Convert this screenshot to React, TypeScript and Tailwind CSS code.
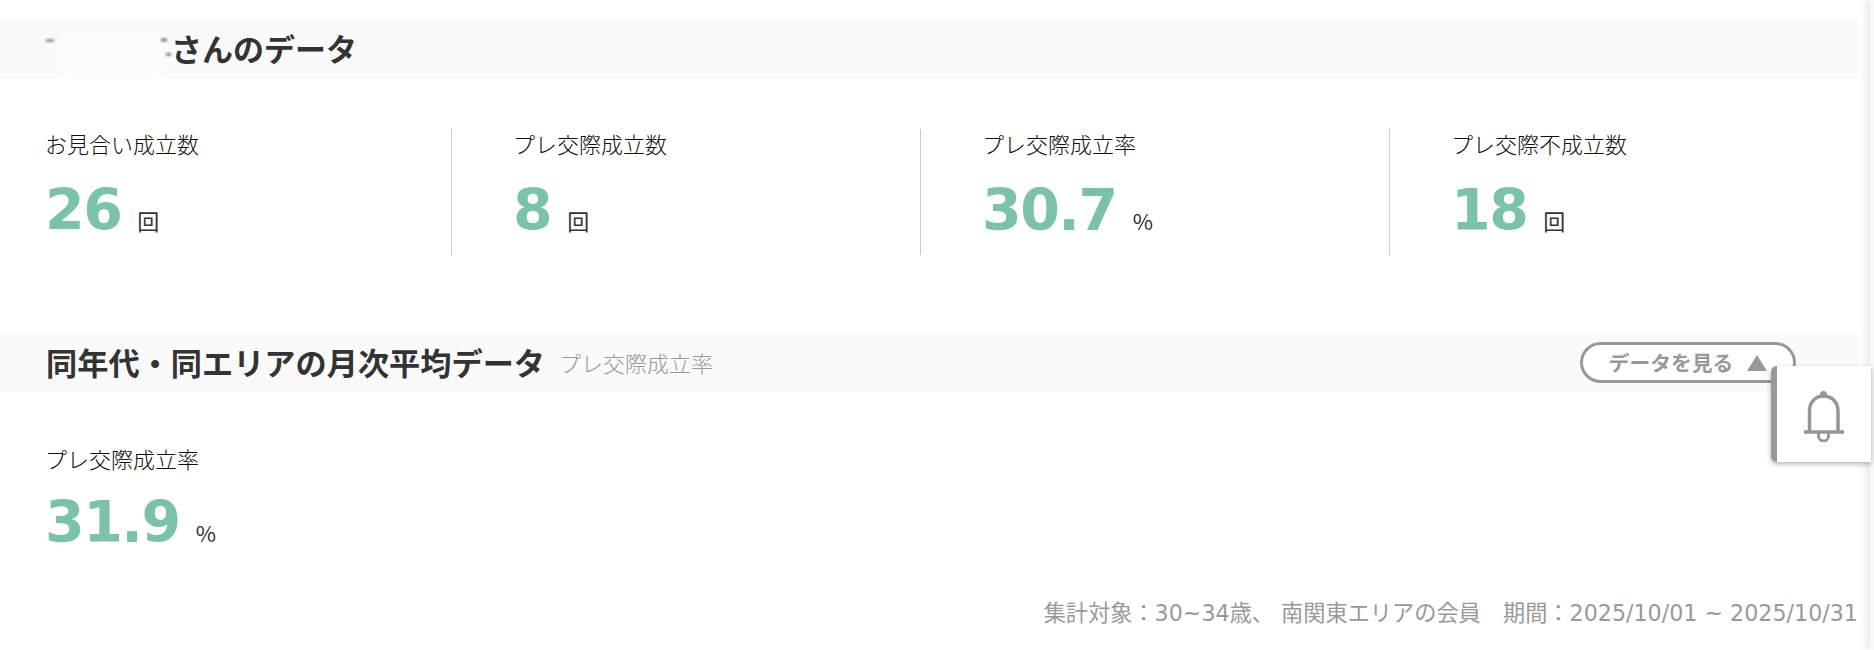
import { Fragment } from 'react'

const font = { fontFamily: '"DejaVu Sans", "Noto Sans CJK JP", sans-serif' }

type Stat = { label: string; value: string; unit: string }

const stats: Stat[] = [
  { label: 'お見合い成立数', value: '26', unit: '回' },
  { label: 'プレ交際成立数', value: '8', unit: '回' },
  { label: 'プレ交際成立率', value: '30.7', unit: '%' },
  { label: 'プレ交際不成立数', value: '18', unit: '回' },
]

function StatBlock({ label, value, unit, tight }: Stat & { tight?: boolean }) {
  return (
    <div>
      <p className="h-[30px] text-[22px] leading-[30px] font-light text-[#111]">{label}</p>
      <p className={`${tight ? 'mt-[11px]' : 'mt-[14px]'} flex h-[70px] items-baseline leading-[70px]`}>
        <span className="text-[57px] font-bold tracking-[-1.5px] text-[#7bc2ab]">{value}</span>
        <span className="ml-[16px] font-['Noto_Sans_CJK_JP'] text-[22px] font-normal text-[#333]">{unit}</span>
      </p>
    </div>
  )
}

function BellIcon() {
  return (
    <svg className="mt-[5px]" width="40" height="51" viewBox="0 0 40 51" fill="none" stroke="#969696" strokeWidth="3.5">
      <circle cx="19.5" cy="3.5" r="3.5" fill="#969696" stroke="none" />
      <path d="M5.5 41V20C5.5 11 11.5 5 19.5 5s14.5 6 14.5 15v21" />
      <path d="M0 41h40" />
      <path d="M14.5 42v3a5 5 0 0 0 10 0v-3" strokeWidth="3" />
    </svg>
  )
}

export default function App() {
  return (
    <div className="relative h-[650px] w-[1874px] overflow-hidden bg-white" style={font}>
      <div className="w-[1858px] pt-[20px]">
        {/* 本人データ */}
        <div className="relative flex h-[59px] items-center bg-[#fafafa] pl-[46px]">
          <h2 className="pt-[1px] text-[31px] font-bold text-[#333]">
            <span className="inline-block w-[125px]" />さんのデータ
          </h2>
          {/* 名前の塗りつぶし跡 */}
          <div className="absolute left-[60px] top-[14px] h-[80px] w-[104px] rounded-b-[30px] bg-white opacity-50 blur-[3px]" />
          <div className="absolute left-[46px] top-[19px] h-[3px] w-[8px] bg-[#999] blur-[1px]" />
          <div className="absolute left-[161px] top-[18px] h-[4px] w-[6px] bg-[#999] blur-[1px]" />
          <div className="absolute left-[166px] top-[33px] h-[3px] w-[5px] bg-[#888] blur-[1px]" />
        </div>

        <div className="mt-[50px] flex h-[126px]">
          {stats.map((s, i) => (
            <Fragment key={s.label}>
              <div className={i === 0 ? 'w-[451px] pl-[45px] pt-[2px]' : 'w-[468px] pl-[61px] pt-[2px]'}>
                <StatBlock {...s} />
              </div>
              {i < 3 && <div className="h-full w-px bg-[#ccc]" />}
            </Fragment>
          ))}
        </div>

        {/* 同年代平均 */}
        <div className="mt-[78px] flex h-[59px] items-center bg-[#fafafa] pl-[46px] pr-[62px]">
          <h2 className="pt-[4px] text-[31.2px] font-bold text-[#333]">同年代・同エリアの月次平均データ</h2>
          <span className="ml-[14px] pt-[4px] text-[22px] font-light text-[#999]">プレ交際成立率</span>
          <button className="ml-auto flex h-[41px] w-[216px] items-center justify-center gap-[14px] rounded-full border-[3px] border-[#999] bg-white pt-[4px] text-[20.8px] font-bold text-[#999]">
            データを見る
            <span className="mb-[3px] h-0 w-0 border-x-[10px] border-b-[16px] border-x-transparent border-b-[#999]" />
          </button>
        </div>

        <div className="mt-[54px] pl-[45px]">
          <StatBlock label="プレ交際成立率" value="31.9" unit="%" tight />
        </div>

        <p className="mt-[40px] whitespace-nowrap text-right text-[22.2px] text-[#999]">
          集計対象：30~34歳、 南関東エリアの会員　期間：2025/10/01 ~ 2025/10/31
        </p>
      </div>

      {/* 右端のパネル影 */}
      <div className="absolute right-0 top-0 h-full w-[4px] bg-[#f8f8f8] shadow-[-2px_0_8px_rgba(0,0,0,0.2)]" />

      {/* 通知ボタン */}
      <div className="absolute right-[3px] top-[366px] flex h-[96px] w-[100px] items-center justify-center rounded-l-[6px] border-l-[6px] border-[#999] bg-white shadow-[0_2px_5px_rgba(0,0,0,0.3)]">
        <BellIcon />
      </div>
    </div>
  )
}
